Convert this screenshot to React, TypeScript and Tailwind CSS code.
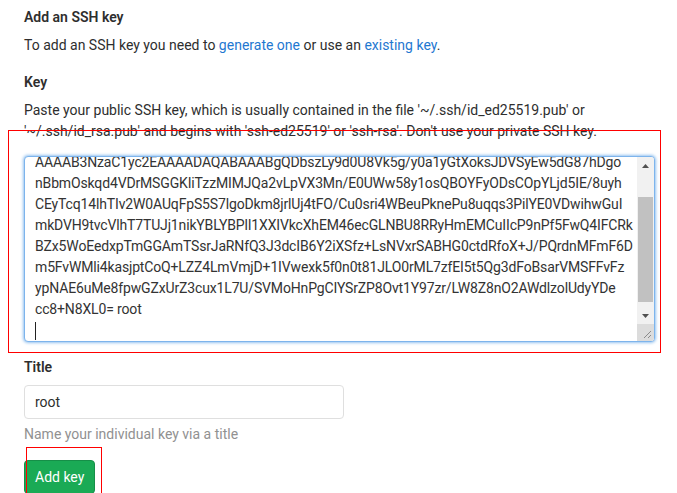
import React from 'react';

const keyLines = [
  'AAAAB3NzaC1yc2EAAAADAQABAAABgQDbszLy9d0U8Vk5g/y0a1yGtXoksJDVSyEw5dG87hDgo',
  'nBbmOskqd4VDrMSGGKIiTzzMIMJQa2vLpVX3Mn/E0UWw58y1osQBOYFyODsCOpYLjd5IE/8uyh',
  'CEyTcq14lhTIv2W0AUqFpS5S7lgoDkm8jrlUj4tFO/Cu0sri4WBeuPknePu8uqqs3PilYE0VDwihwGuI',
  'mkDVH9tvcVlhT7TUJj1nikYBLYBPlI1XXIVkcXhEM46ecGLNBU8RRyHmEMCuIIcP9nPf5FwQ4IFCRk',
  'BZx5WoEedxpTmGGAmTSsrJaRNfQ3J3dcIB6Y2iXSfz+LsNVxrSABHG0ctdRfoX+J/PQrdnMFmF6D',
  'm5FvWMli4kasjptCoQ+LZZ4LmVmjD+1IVwexk5f0n0t81JLO0rML7zfEI5t5Qg3dFoBsarVMSFFvFz',
  'ypNAE6uMe8fpwGZxUrZ3cux1L7U/SVMoHnPgCIYSrZP8Ovt1Y97zr/LW8Z8nO2AWdlzolUdyYDe',
  'cc8+N8XL0= root',
];

const ScrollArrow = ({ up }: { up?: boolean }) => (
  <div className="h-[17px] flex items-center justify-center">
    <svg width="7" height="4" viewBox="0 0 7 4">
      <path d={up ? 'M0 4 L3.5 0 L7 4 Z' : 'M0 0 L3.5 4 L7 0 Z'} fill="#505050" />
    </svg>
  </div>
);

const KeyTextarea = () => (
  <div className="mt-[14px] w-[631px] h-[186px] flex overflow-hidden rounded-[4px] border border-[#7db4ec] bg-white shadow-[0_0_3px_1px_rgba(115,175,234,0.75)]">
    <div className="flex-1 overflow-hidden pl-[10px]">
      <div className="-mt-[5px] text-[14px] leading-[21px] tracking-[-0.15px] text-[#333]">
        {keyLines.map((l) => (
          <div key={l} className="whitespace-nowrap">
            {l}
          </div>
        ))}
        <div className="h-[21px] flex items-center">
          <span className="block w-px h-[18px] bg-[#222]" />
        </div>
      </div>
    </div>
    {/* scrollbar */}
    <div className="w-[17px] flex flex-col bg-[#f1f1f1]">
      <ScrollArrow up />
      <div className="h-[23px]" />
      <div className="h-[105px] mx-[1px] bg-[#c1c1c1]" />
      <div className="flex-1" />
      <ScrollArrow />
      <div className="h-[17px] bg-[#dcdcdc] flex items-end justify-end">
        <svg width="9" height="9" viewBox="0 0 9 9" className="mb-[2px] mr-[2px]">
          <path d="M8 1 L1 8 M8 5 L5 8" stroke="#8a8a8a" strokeWidth="1" />
        </svg>
      </div>
    </div>
  </div>
);

export default function App() {
  return (
    <div className="relative h-[493px] overflow-hidden bg-white pl-6 pt-[7px] font-['Roboto',sans-serif] text-[14px] text-[#2e2e2e]">
      <h3 className="font-semibold leading-5">Add an SSH key</h3>
      <p className="mt-2 leading-5">
        To add an SSH key you need to <a className="text-[#1f78d1]">generate one</a> or use an{' '}
        <a className="text-[#1f78d1]">existing key</a>.
      </p>

      <label className="mt-[17px] block font-semibold leading-5">Key</label>
      <p className="mt-2 w-[631px] leading-[21px]">
        Paste your public SSH key, which is usually contained in the file '~/.ssh/id_ed25519.pub' or
        '~/.ssh/id_rsa.pub' and begins with 'ssh-ed25519' or 'ssh-rsa'. Don't use your private SSH key.
      </p>

      <KeyTextarea />

      <label className="mt-[15px] block font-semibold leading-5">Title</label>
      <div className="mt-2 w-[320px] h-[34px] flex items-center rounded-[4px] border border-[#dfdfdf] px-[10px]">
        root
      </div>
      <p className="mt-[5px] leading-5 text-[#919191]">Name your individual key via a title</p>

      <button className="mt-4 h-[34px] rounded-[4px] border border-[#168f48] bg-[#1aaa55] px-[10px] text-white">
        Add key
      </button>

      {/* red annotation boxes */}
      <div className="absolute left-[8px] top-[130px] w-[653px] h-[223px] border border-[#ff0000]" />
      <div className="absolute left-[26px] top-[447px] w-[76px] h-[60px] border border-[#ff0000]" />
    </div>
  );
}
